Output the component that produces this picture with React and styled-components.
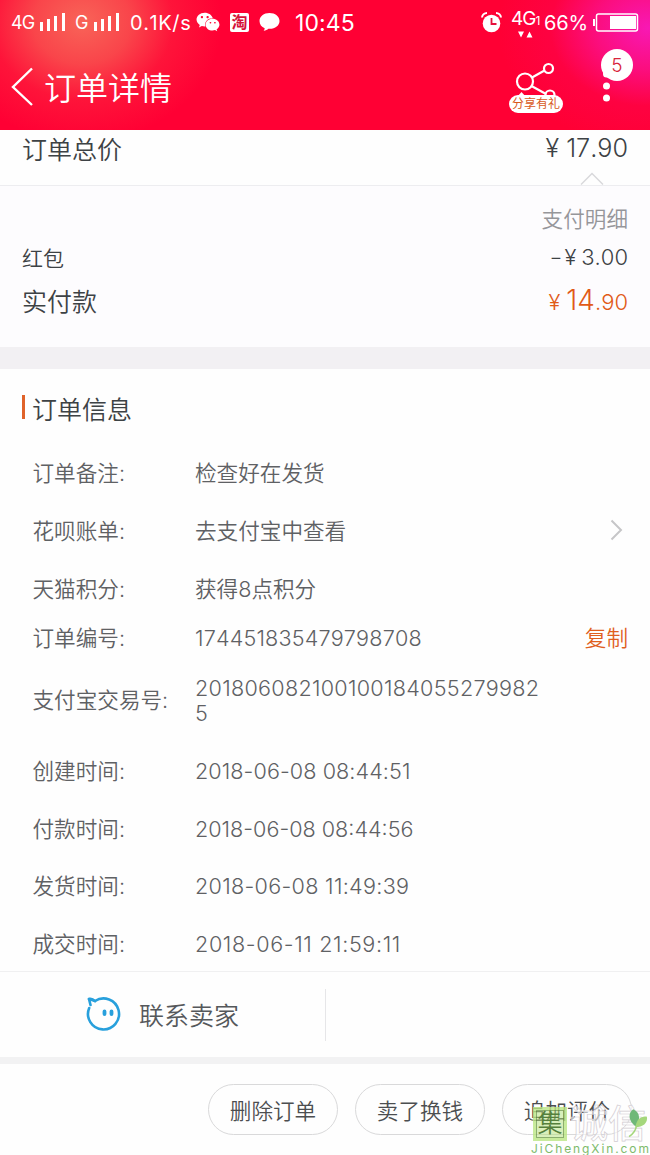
import React from 'react';
import styled, { createGlobalStyle } from 'styled-components';
import { FaWeixin } from 'react-icons/fa';

const GlobalStyle = createGlobalStyle`
  * {
    box-sizing: border-box;
  }

  body {
    margin: 0;
    font-family: Inter, 'Noto Sans CJK SC', sans-serif;
    font-weight: 350;
    font-kerning: none;
    color: #3d4245;
  }
`;

const Screen = styled.div`
  position: relative;
  display: flex;
  flex-direction: column;
  width: 650px;
  height: 1155px;
  overflow: hidden;
  background: #fefefe;
`;

/* Red top area with an orange glow on the left and a pink one on the right */
const TopArea = styled.header`
  flex: none;
  height: 130px;
  color: #fff;
  background:
    radial-gradient(ellipse 140px 120px at 82px 22px, #f86458, rgba(248, 86, 80, 0.8) 35%, rgba(252, 50, 66, 0.4) 65%, rgba(255, 0, 52, 0) 100%),
    radial-gradient(ellipse 150px 120px at 648px 28px, #f818b4, rgba(250, 18, 150, 0.75) 35%, rgba(252, 6, 90, 0.35) 65%, rgba(255, 0, 52, 0) 100%),
    #ff0034;
`;

const StatusBar = styled.div`
  display: flex;
  align-items: center;
  height: 44px;
  padding: 0 11px;
  font-weight: 400;
  white-space: nowrap;
`;

const StatusText = styled.span`
  padding-top: 1px;
  font-size: ${({ $size }) => $size}px;
  line-height: 24px;
  width: ${({ $width }) => $width}px;
  margin-right: ${({ $gap }) => $gap || 0}px;
  letter-spacing: ${({ $spacing }) => $spacing || 0}px;
`;

const StatusIcon = styled.svg`
  flex: none;
  margin-right: ${({ $gap }) => $gap || 0}px;
`;

const WeChat = styled(FaWeixin)`
  flex: none;
  margin-right: 10px;
`;

const TaoBadge = styled.span`
  width: 19px;
  height: 19px;
  margin-right: 10px;
  border-radius: 2px;
  background: #fff;
  color: #d5123a;
  font-size: 16px;
  font-weight: 700;
  line-height: 18px;
  text-align: center;
`;

const Network = styled.span`
  display: flex;
  flex-direction: column;
  width: 31px;
  height: 27px;
  margin-right: 2px;
  font-size: 19px;
  line-height: 20px;
  letter-spacing: -1px;

  small {
    font-size: 12px;
  }

  svg {
    flex: none;
    margin: 0 0 0 7px;
  }
`;

const Spacer = styled.div`
  flex: 1;
`;

const TitleBar = styled.div`
  display: flex;
  align-items: center;
  height: 86px;
  padding: 0 23px 0 11px;
`;

const Title = styled.h1`
  flex: 1;
  margin: 0 0 0 10px;
  padding-top: 3px;
  font-size: 32px;
  font-weight: 350;
  line-height: 40px;
`;

const Share = styled.div`
  display: flex;
  flex-direction: column;
  align-items: center;
  width: 54px;
  height: 52px;
  margin-right: 39px;

  svg {
    flex: none;
  }
`;

const ShareLabel = styled.span`
  flex: none;
  width: 54px;
  height: 18px;
  margin-top: -3px;
  border-radius: 9px;
  background: #fff;
  color: #d85a1c;
  font-size: 12px;
  font-weight: 400;
  line-height: 18px;
  text-align: center;
  white-space: nowrap;
`;

const More = styled.div`
  position: relative;
  width: 25px;
  height: 54px;
`;

const Badge = styled.span`
  position: absolute;
  top: -11px;
  left: -1px;
  width: 32px;
  height: 32px;
  border-radius: 50%;
  background: #fff;
  color: #d8233c;
  font-size: 19px;
  line-height: 33px;
  text-align: center;
`;

const TotalRow = styled.section`
  flex: none;
  display: flex;
  justify-content: space-between;
  height: 56px;
  padding: 0 22px;
  border-bottom: 1px solid #ededf0;
  font-size: 25px;
  line-height: 40px;
`;

const TotalPrice = styled.div`
  display: flex;
  flex-direction: column;
  align-items: flex-end;
  line-height: 36px;

  svg {
    margin: 6px 24px 0 0;
  }
`;

const Payment = styled.section`
  flex: none;
  height: 161px;
  padding: 13px 22px 0;
  background: #fdfcfe;
`;

const PaymentRow = styled.div`
  display: flex;
  justify-content: ${({ $end }) => ($end ? 'flex-end' : 'space-between')};
  align-items: center;
  height: ${({ $height }) => $height}px;
  font-size: ${({ $size }) => $size}px;
  color: ${({ $muted }) => ($muted ? '#96969a' : 'inherit')};
`;

const Amount = styled.span`
  display: flex;
  align-items: baseline;
  font-size: ${({ $size }) => $size || 22}px;
  color: ${({ $accent }) => ($accent ? '#e15a17' : 'inherit')};

  big {
    font-size: 28px;
  }
`;

const Yen = styled.span`
  margin: 0 ${({ $gap }) => $gap || 5}px 0 3px;
`;

/* Wide dash in front of a deduction */
const Minus = styled.span`
  transform: scaleX(1.3);
`;

const Divider = styled.div`
  flex: none;
  height: 22px;
  background: #f2f0f3;
`;

const Info = styled.section`
  flex: none;
  height: 602px;
  overflow: hidden;
  padding: 0 22px;
`;

const InfoTitle = styled.h2`
  display: flex;
  align-items: center;
  height: 76px;
  margin: 0;
  padding-top: 2px;
  font-size: 25px;
  font-weight: 350;

  &::before {
    content: '';
    width: 3px;
    height: 24px;
    margin: -3px 7px 0 0;
    background: #e0632a;
  }
`;

const InfoRow = styled.div`
  display: flex;
  align-items: center;
  height: ${({ $height }) => $height || 57.7}px;
  padding-left: 10.5px;
  color: #5f6164;
  font-size: 21.6px;
  line-height: 25px;
`;

const Label = styled.span`
  flex: none;
  width: 162.5px;
`;

const Value = styled.span`
  width: 350px;
  letter-spacing: ${({ $spacing }) => $spacing || 0}px;
  word-break: break-all;
`;

const Copy = styled.button`
  margin-left: auto;
  padding: 0;
  border: 0;
  background: none;
  color: #e05f1e;
  font: inherit;
`;

const Arrow = styled.svg`
  margin: -3px 5px 0 auto;
`;

const Contact = styled.section`
  flex: none;
  display: flex;
  align-items: center;
  height: 86px;
  border-top: 1px solid #f0f0f1;
  color: #55585b;
  font-size: 25px;
`;

const ContactSeller = styled.div`
  display: flex;
  align-items: center;
  gap: 17px;
  width: 326px;
  height: 52px;
  padding: 0 0 1px 86px;
  border-right: 1px solid #e6e6e8;
`;

const Footer = styled.footer`
  flex: 1;
  display: flex;
  justify-content: flex-end;
  gap: 17px;
  padding: 20px 18px 0 0;
  border-top: 7px solid #f2f2f3;
`;

const ActionButton = styled.button`
  width: 130px;
  height: 51px;
  padding: 0 0 1px;
  border: 1px solid #d9d9da;
  border-radius: 26px;
  background: transparent;
  color: #4c4e50;
  font: inherit;
  font-size: 21.6px;
`;

const Watermark = styled.div`
  position: absolute;
  left: 531px;
  top: 1106px;
  width: 119px;
  height: 49px;
  pointer-events: none;
`;

const WatermarkMain = styled.div`
  display: flex;
  align-items: center;
  height: 35px;
  padding-left: 2px;
`;

const WatermarkSeal = styled.span`
  width: 34px;
  height: 34px;
  border: 3px solid rgba(190, 232, 135, 0.6);
  outline: 1px solid rgba(90, 130, 60, 0.6);
  outline-offset: -4px;
  background: rgba(178, 224, 120, 0.5);
  color: #55803c;
  font-size: 25px;
  font-weight: 350;
  line-height: 27px;
  text-align: center;
`;

const WatermarkName = styled.span`
  margin-left: 3px;
  color: rgba(255, 255, 255, 0.6);
  font-size: 38px;
  font-weight: 500;
  line-height: 35px;
  white-space: nowrap;
  -webkit-text-stroke: 0.7px #d2ccd2;
`;

const WatermarkUrl = styled.div`
  color: #7dbb6b;
  font-size: 12px;
  font-weight: 400;
  line-height: 15px;
  letter-spacing: 1.9px;
  white-space: nowrap;
`;

const Leaf = styled.svg`
  position: absolute;
  top: 2px;
  right: 2px;
`;

const details = [
  { label: '订单备注:', value: '检查好在发货' },
  { label: '花呗账单:', value: '去支付宝中查看', arrow: true },
  { label: '天猫积分:', value: '获得8点积分' },
  { label: '订单编号:', value: '174451835479798708', copy: true, height: 40.5, spacing: 0.17 },
  { label: '支付宝交易号:', value: '2018060821001001840552799825', height: 84, spacing: 0.28 },
  { label: '创建时间:', value: '2018-06-08 08:44:51', spacing: 0.08 },
  { label: '付款时间:', value: '2018-06-08 08:44:56' },
  { label: '发货时间:', value: '2018-06-08 11:49:39', spacing: 0.3 },
  { label: '成交时间:', value: '2018-06-11 21:59:11', spacing: 0.63 },
];

const Signal = ({ gap }) => (
  <StatusIcon $gap={gap} width="25" height="19" viewBox="0 0 25 19" fill="#fff">
    <rect x="0" y="9" width="3" height="9" />
    <rect x="7" y="6" width="3" height="12" />
    <rect x="14" y="3" width="3" height="15" />
    <rect x="22" y="0" width="3" height="18" />
  </StatusIcon>
);

const Status = () => (
  <StatusBar>
    <StatusText $size={18} $width={24} $gap={5} $spacing={-0.8}>4G</StatusText>
    <Signal gap={10} />
    <StatusText $size={18} $width={14} $gap={5}>G</StatusText>
    <Signal gap={11} />
    <StatusText $size={20} $width={61} $gap={5} $spacing={0.6}>0.1K/s</StatusText>
    <WeChat size={24} />
    <TaoBadge>淘</TaoBadge>
    <StatusIcon $gap={15} width="21" height="20" viewBox="0 0 21 20" fill="#fff">
      <path d="M10.5 1C4.8 1 .5 4.5 .5 9c0 3.3 2 6 5.2 7.2-.1 1-.5 1.8-1.1 2.6 2.2-.2 3.8-1.1 4.8-2 6.4.5 11.1-3 11.1-7.8C20.5 4.5 16.2 1 10.5 1z" />
    </StatusIcon>
    <StatusText $size={23} $width={62} $spacing={0.1}>10:45</StatusText>
    <Spacer />
    <StatusIcon $gap={9} width="21" height="21" viewBox="0 0 21 21">
      <path d="M1 5.5A5 5 0 0 1 6 1M20 5.5A5 5 0 0 0 15 1" fill="none" stroke="#fff" strokeWidth="2" />
      <circle cx="10.5" cy="11.5" r="8.8" fill="#fff" />
      <path d="M10.5 6v6h5" fill="none" stroke="#e5103c" strokeWidth="1.8" />
    </StatusIcon>
    <Network>
      <span>4G<small>1</small></span>
      <svg width="16" height="7" viewBox="0 0 16 7" fill="#fff">
        <path d="M0 .5h6L3 6.5zM8.5 6.5h6L11.5 .5z" />
      </svg>
    </Network>
    <StatusText $size={20} $width={43} $gap={6} $spacing={-0.1}>66%</StatusText>
    <svg width="46" height="19" viewBox="0 0 46 19">
      <rect x="0" y="6" width="2" height="7" fill="#fff" />
      <rect x="3.5" y="1" width="41" height="17" rx="2" fill="none" stroke="#fff" strokeWidth="1.5" />
      <rect x="17" y="3" width="26" height="13" fill="#fff" />
    </svg>
  </StatusBar>
);

const App = () => (
  <>
    <GlobalStyle />
    <Screen>
      <TopArea>
        <Status />
        <TitleBar>
          <svg width="23" height="40" viewBox="0 0 23 40" fill="none" stroke="#fff" strokeWidth="2.4">
            <path d="M21 1.5L2 20L21 38" />
          </svg>
          <Title>订单详情</Title>
          <Share>
            <svg width="42" height="37" viewBox="0 0 42 37" fill="none" stroke="#fff" strokeWidth="2.2">
              <circle cx="10" cy="20.5" r="8" />
              <circle cx="33.5" cy="7.5" r="4.5" />
              <circle cx="35" cy="34" r="4.5" />
              <path d="M17 16.5L29.5 9.5M16.5 25L31 33" />
              <path d="M2 36L6.5 31L11 36z" fill="#fff" stroke="none" />
            </svg>
            <ShareLabel>分享有礼</ShareLabel>
          </Share>
          <More>
            <svg width="12" height="50" viewBox="0 0 12 50" fill="#fff">
              <circle cx="4.5" cy="14" r="3.5" />
              <circle cx="4.5" cy="26" r="3.5" />
              <circle cx="4.5" cy="38" r="3.5" />
            </svg>
            <Badge>5</Badge>
          </More>
        </TitleBar>
      </TopArea>

      <TotalRow>
        <span>订单总价</span>
        <TotalPrice>
          <Amount $size={25.2}><Yen $gap={7}>¥</Yen>17.90</Amount>
          <svg width="24" height="13" viewBox="0 0 24 13" fill="none" stroke="#d9d9dc" strokeWidth="1.5">
            <path d="M1 12.5L12 1.5L23 12.5" />
          </svg>
        </TotalPrice>
      </TotalRow>

      <Payment>
        <PaymentRow $end $muted $height={37} $size={21.6}>支付明细</PaymentRow>
        <PaymentRow $height={42} $size={21}>
          <span>红包</span>
          <Amount><Minus>-</Minus><Yen>¥</Yen>3.00</Amount>
        </PaymentRow>
        <PaymentRow $height={44} $size={25}>
          <span>实付款</span>
          <Amount $accent $size={22}><Yen $gap={6}>¥</Yen><big>14</big>.90</Amount>
        </PaymentRow>
      </Payment>

      <Divider />

      <Info>
        <InfoTitle>订单信息</InfoTitle>
        {details.map((item) => (
          <InfoRow key={item.label} $height={item.height}>
            <Label>{item.label}</Label>
            <Value $spacing={item.spacing}>{item.value}</Value>
            {item.copy && <Copy>复制</Copy>}
            {item.arrow && (
              <Arrow width="13" height="22" viewBox="0 0 13 22" fill="none" stroke="#c6c6c8" strokeWidth="2">
                <path d="M1.5 1.5L11 11L1.5 20.5" />
              </Arrow>
            )}
          </InfoRow>
        ))}
      </Info>

      <Contact>
        <ContactSeller>
          <svg width="36" height="36" viewBox="0 0 36 36" fill="none" stroke="#28a0dc" strokeWidth="2.6" strokeLinecap="round" strokeLinejoin="round">
            <path d="M3.2 12A15.5 15.5 0 1 0 9 5L3 3L4.5 9" />
            <path d="M3 3Q6 2 9 5.2" />
            <path d="M18.5 15.5v2.5M25.5 15.5v2.5" strokeWidth="3.8" />
          </svg>
          联系卖家
        </ContactSeller>
      </Contact>

      <Footer>
        <ActionButton>删除订单</ActionButton>
        <ActionButton>卖了换钱</ActionButton>
        <ActionButton>追加评价</ActionButton>
      </Footer>

      <Watermark>
        <WatermarkMain>
          <WatermarkSeal>集</WatermarkSeal>
          <WatermarkName>诚信</WatermarkName>
        </WatermarkMain>
        <WatermarkUrl>JiChengXin.com</WatermarkUrl>
        <Leaf width="20" height="30" viewBox="0 0 19 28">
          <path d="M7 17C0 12 0 4 5 1C12 4 12 12 7 17z" fill="#6fb878" />
          <path d="M7 18C8 10 13 7 18 8C19 14 14 18 7 18z" fill="#a5d77c" />
          <path d="M8 17Q7 23 1 27" fill="none" stroke="#a5d77c" strokeWidth="1.5" />
        </Leaf>
      </Watermark>
    </Screen>
  </>
);

export default App;
